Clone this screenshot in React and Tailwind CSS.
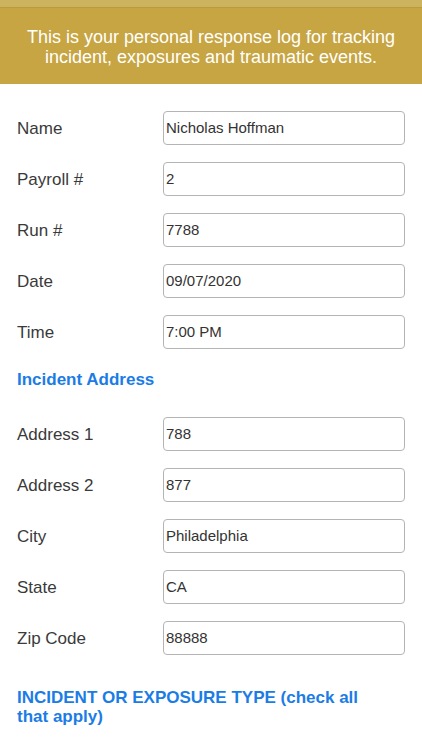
const fields1 = [
  { label: "Name", value: "Nicholas Hoffman" },
  { label: "Payroll #", value: "2" },
  { label: "Run #", value: "7788" },
  { label: "Date", value: "09/07/2020" },
  { label: "Time", value: "7:00 PM" },
];

const fields2 = [
  { label: "Address 1", value: "788" },
  { label: "Address 2", value: "877" },
  { label: "City", value: "Philadelphia" },
  { label: "State", value: "CA" },
  { label: "Zip Code", value: "88888" },
];

function Row({ label, value }) {
  return (
    <div className="flex items-center h-[34px]">
      <div className="w-[146px] text-[17px] text-[#3a3a3a] pt-[1px]">{label}</div>
      <div className="flex-1 h-[34px] border border-[#b4b4b4] rounded-[4px] bg-white flex items-center px-[2px] text-[15px] text-[#333]">
        {value}
      </div>
    </div>
  );
}

export default function App() {
  return (
    <div
      className="w-[422px] min-h-[750px] bg-white overflow-hidden"
      style={{ fontFamily: '"Liberation Sans", Arial, sans-serif' }}
    >
      <div className="h-[8px] bg-[#ccb35f] border-b border-[#b99a3c]" />
      <div className="bg-[#c6a542] h-[76px] flex items-center justify-center px-2 pt-[2px] text-center text-white text-[18px] leading-[20px]">
        <p>
          This is your personal response log for tracking
          <br />
          incident, exposures and traumatic events.
        </p>
      </div>

      <div className="pl-[17px] pr-[17px] pt-[27px]">
        <div className="flex flex-col gap-[17px]">
          {fields1.map((f) => (
            <Row key={f.label} {...f} />
          ))}
        </div>

        <h2 className="mt-[21px] mb-[27px] text-[17px] leading-[20px] font-bold text-[#1b7ce5]">
          Incident Address
        </h2>

        <div className="flex flex-col gap-[17px]">
          {fields2.map((f) => (
            <Row key={f.label} {...f} />
          ))}
        </div>

        <h2 className="mt-[33px] text-[17px] leading-[19px] font-bold text-[#1b7ce5] pr-[40px]">
          INCIDENT OR EXPOSURE TYPE (check all that apply)
        </h2>
      </div>
    </div>
  );
}
